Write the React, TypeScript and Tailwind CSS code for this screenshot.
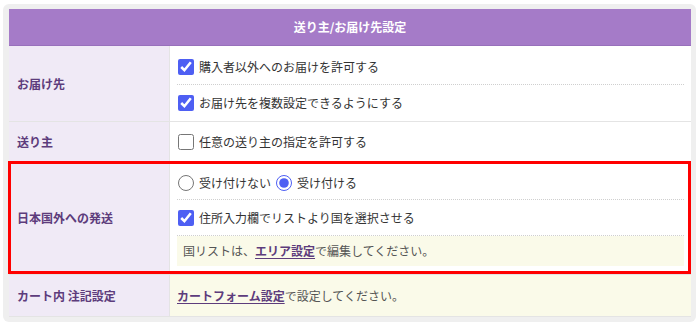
const jp = { fontFamily: '"Noto Sans CJK JP", "Noto Sans", sans-serif' };

function Check({ checked, label }: { checked?: boolean; label: string }) {
  return (
    <label className="flex items-center gap-[5px] h-[35px] pl-[1px]">
      <input
        type="checkbox"
        defaultChecked={checked}
        className="m-0 w-4 h-4 accent-[#4e5ff3]"
      />
      <span>{label}</span>
    </label>
  );
}

function Label({ children }: { children: React.ReactNode }) {
  return (
    <div className="w-[161px] shrink-0 bg-[#f0eaf6] border-r border-[#e4e4e4] px-2 flex items-center font-bold text-[#5d3c7c]">
      {children}
    </div>
  );
}

export default function App() {
  return (
    <div className="w-[700px] h-[324px] bg-white pl-[3px] pt-1 pr-1 pb-[3px]" style={jp}>
      <div className="rounded-md bg-[#efefef] pl-[6px] pt-[5px] pr-[4px] pb-[5px]">
        <div className="w-[682px] bg-white text-[12px] leading-5 text-[#333]">
          <div className="h-[37px] bg-[#a57bc8] border-b border-[#9870bb] flex items-center justify-center font-bold text-white">
            送り主/お届け先設定
          </div>

          {/* お届け先 */}
          <div className="flex border-b border-[#e4e4e4]">
            <Label>お届け先</Label>
            <div className="flex-1 px-[7px] pt-[3px] pb-px">
              <Check checked label="購入者以外へのお届けを許可する" />
              <div className="border-t border-dotted border-[#cfcfcf]" />
              <Check checked label="お届け先を複数設定できるようにする" />
            </div>
          </div>

          {/* 送り主 */}
          <div className="flex border-b border-[#e4e4e4]">
            <Label>送り主</Label>
            <div className="flex-1 px-[7px] py-[2px]">
              <Check label="任意の送り主の指定を許可する" />
            </div>
          </div>

          {/* 日本国外への発送 */}
          <div className="relative flex border-b border-[#e4e4e4]">
            <Label>日本国外への発送</Label>
            <div className="flex-1 px-[7px] pt-[5px] pb-[8px]">
              <div className="flex items-center gap-[5px] pl-[1px] h-[32px]">
                <label className="flex items-center gap-[5px]">
                  <input type="radio" name="intl" className="m-0 w-4 h-4 accent-[#4e5ff3]" />
                  <span>受け付けない</span>
                </label>
                <label className="flex items-center gap-[5px]">
                  <input type="radio" name="intl" defaultChecked className="m-0 w-4 h-4 accent-[#4e5ff3]" />
                  <span>受け付ける</span>
                </label>
              </div>
              <div className="border-t border-dotted border-[#cfcfcf]" />
              <label className="flex items-center gap-[5px] h-[35px] pl-[1px]">
                <input type="checkbox" defaultChecked className="m-0 w-4 h-4 accent-[#4e5ff3]" />
                <span>住所入力欄でリストより国を選択させる</span>
              </label>
              <div className="border-t border-dotted border-[#cfcfcf]" />
              <div className="h-[30px] bg-[#fafae9] flex items-center pl-[6px] text-[#555]">
                国リストは、
                <a href="#" className="font-bold text-[#5d3c7c] underline underline-offset-2">
                  エリア設定
                </a>
                で編集してください。
              </div>
            </div>
            <div className="absolute -left-px -top-px right-0 bottom-0 border-[3px] border-[#f00] pointer-events-none" />
          </div>

          {/* カート内 注記設定 */}
          <div className="flex border-b border-[#e4e4e4] h-[42px]">
            <Label>カート内 注記設定</Label>
            <div className="flex-1 px-[7px] bg-[#fafae9] flex items-center text-[#555]">
              <a href="#" className="font-bold text-[#5d3c7c] underline underline-offset-2">
                カートフォーム設定
              </a>
              で設定してください。
            </div>
          </div>
        </div>
      </div>
    </div>
  );
}
